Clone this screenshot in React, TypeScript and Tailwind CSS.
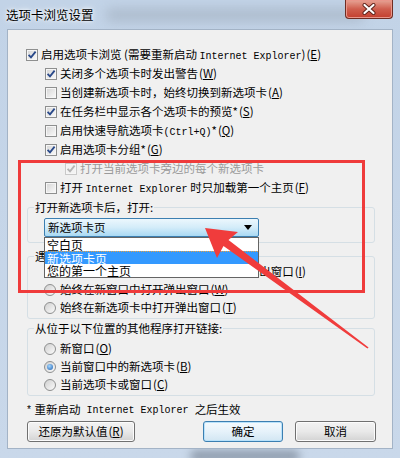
import React from "react";

const mono = "font-['Liberation_Mono',monospace] text-[10px]";

function K({ k }: { k: string }) {
  return (
    <span className="ml-[1px]">
      (<span className="underline">{k}</span>)
    </span>
  );
}

function Box({ checked, disabled }: { checked?: boolean; disabled?: boolean }) {
  return (
    <span
      className={`flex items-center justify-center w-[12px] h-[12px] shrink-0 border shadow-[inset_0_0_0_1px_#f6f6f6] ${
        disabled
          ? "border-[#c9c9c9] bg-[#f3f3f3]"
          : "border-[#8e8f8f] bg-linear-to-br from-[#d4d4d4] to-[#fbfbfb]"
      }`}
    >
      {checked && (
        <svg width="10" height="10" viewBox="0 0 10 10">
          <path
            d="M1.6 4.8 L4 7.4 L8.6 1.6"
            fill="none"
            stroke={disabled ? "#b4b4b4" : "#29498a"}
            strokeWidth="1.8"
          />
        </svg>
      )}
    </span>
  );
}

function Radio({ on }: { on?: boolean }) {
  return (
    <span className="flex items-center justify-center w-[12px] h-[12px] shrink-0 rounded-full border border-[#8e8f8f] bg-linear-to-br from-[#d0d0d0] to-[#fbfbfb]">
      {on && (
        <span className="w-[6px] h-[6px] rounded-full bg-[radial-gradient(circle_at_40%_35%,#a6d8ff,#1d5fb0)]" />
      )}
    </span>
  );
}

function CheckRow({
  pad,
  checked,
  disabled,
  children,
}: {
  pad: string;
  checked?: boolean;
  disabled?: boolean;
  children: React.ReactNode;
}) {
  return (
    <div className={`flex items-center gap-[3px] h-[19px] ${pad} ${disabled ? "text-[#9a9a9a]" : ""}`}>
      <Box checked={checked} disabled={disabled} />
      <span className="whitespace-nowrap">{children}</span>
    </div>
  );
}

function RadioRow({ on, children }: { on?: boolean; children: React.ReactNode }) {
  return (
    <div className="flex items-center gap-[4px] h-[18px] pl-[16px]">
      <Radio on={on} />
      <span className="whitespace-nowrap">{children}</span>
    </div>
  );
}

function Group({ title, className, children }: { title: string; className: string; children: React.ReactNode }) {
  return (
    <fieldset className={`ml-[19px] mr-[17px] border border-[#d5dfe5] rounded-[3px] ${className}`}>
      <legend className="ml-[6px] px-[1px] leading-[14px] whitespace-nowrap">{title}</legend>
      {children}
    </fieldset>
  );
}

function Button({ primary, className, children }: { primary?: boolean; className: string; children: React.ReactNode }) {
  return (
    <button
      className={`h-[21px] rounded-[3px] border flex items-center justify-center ${className} ${
        primary
          ? "border-[#3c7fb1] bg-linear-to-b from-[#f4fafd] via-[#e6f2fa] to-[#d2e6f3] shadow-[inset_0_0_0_1px_#b9e2fb]"
          : "border-[#707070] bg-linear-to-b from-[#f3f3f3] via-[#e9e9e9] to-[#d3d3d3] shadow-[inset_0_0_0_1px_#fcfcfc]"
      }`}
    >
      {children}
    </button>
  );
}

export default function App() {
  return (
    <div className="relative w-[400px] h-[458px] overflow-hidden bg-linear-to-b from-[#c2d3e7] to-[#c9d8ea] font-['Noto_Sans_CJK_SC',sans-serif] text-[11.5px] text-black">
      {/* blurred desktop behind the glass frame */}
      <div className="absolute left-[105px] top-[8px] w-[260px] h-[14px] rounded-full bg-[#9aa7b6] opacity-50 blur-[6px]" />
      <div className="absolute left-[190px] top-[450px] w-[110px] h-[12px] rounded-full bg-[#5a6675] opacity-50 blur-[4px]" />

      {/* Title bar */}
      <div className="relative flex items-start justify-between h-[29px]">
        <span className="pl-[6px] pt-[7px] text-[12.5px] leading-[16px] [text-shadow:0_0_6px_#fff,0_0_3px_#fff]">
          选项卡浏览设置
        </span>
        <div className="mr-[7px] w-[48px] h-[19px] rounded-b-[4px] border border-t-0 border-[#6e2c22] bg-linear-to-b from-[#e6a496] via-[#cf5e4e] to-[#c33e2d] shadow-[inset_0_0_0_1px_#e9968a] flex items-center justify-center">
          <svg width="16" height="12" viewBox="0 0 16 12">
            <path d="M3.5 2 L12.5 10 M12.5 2 L3.5 10" stroke="#5b2119" strokeWidth="4" strokeLinecap="round" />
            <path d="M3.5 2 L12.5 10 M12.5 2 L3.5 10" stroke="#ffffff" strokeWidth="2.2" strokeLinecap="round" />
          </svg>
        </div>
      </div>

      {/* Client area */}
      <div className="relative mx-[7px] h-[420px] border border-[#a3b3c6] bg-[#f0f0f0] pt-[15px]">
        <CheckRow pad="pl-[18px]" checked>
          启用选项卡浏览 (需要重新启动 <span className={mono}>Internet Explorer</span>)<K k="E" />
        </CheckRow>
        <CheckRow pad="pl-[37px]" checked>
          关闭多个选项卡时发出警告<K k="W" />
        </CheckRow>
        <CheckRow pad="pl-[37px]">
          当创建新选项卡时，始终切换到新选项卡<K k="A" />
        </CheckRow>
        <CheckRow pad="pl-[37px]" checked>
          在任务栏中显示各个选项卡的预览*<K k="S" />
        </CheckRow>
        <CheckRow pad="pl-[37px]">
          启用快速导航选项卡<span className={mono}>(Ctrl+Q)</span>*<K k="Q" />
        </CheckRow>
        <CheckRow pad="pl-[37px]" checked>
          启用选项卡分组*<K k="G" />
        </CheckRow>
        <CheckRow pad="pl-[57px]" checked disabled>
          打开当前选项卡旁边的每个新选项卡
        </CheckRow>
        <CheckRow pad="pl-[37px]">
          打开 <span className={mono}>Internet Explorer</span> 时只加载第一个主页<K k="F" />
        </CheckRow>

        <Group title="打开新选项卡后，打开:" className="mt-[3px] pb-[5px]">
          <div className="relative ml-[16px] mt-[4px] w-[215px]">
            <div className="flex items-center justify-between h-[19px] pl-[3px] pr-[6px] rounded-[2px] border border-[#3c7fb1] bg-linear-to-b from-[#ecf7fd] via-[#d3ecf9] to-[#a9d9f3]">
              <span>新选项卡页</span>
              <svg width="8" height="5" viewBox="0 0 8 5">
                <path d="M0 0 H8 L4 5 Z" fill="#000" />
              </svg>
            </div>
            {/* open list */}
            <div className="absolute left-0 top-[19px] z-10 w-[215px] border border-[#646464] bg-white text-[12px] leading-[13px]">
              <div className="h-[13px] pl-[2px]">空白页</div>
              <div className="h-[13px] pl-[2px] bg-[#3399ff] text-white border-t border-dotted border-[#e8a040]">新选项卡页</div>
              <div className="h-[13px] pl-[2px]">您的第一个主页</div>
            </div>
          </div>
        </Group>

        <Group title="遇到弹出窗口时:" className="mt-[6px] pb-[1px]">
          <RadioRow on>
            让 <span className={mono}>Internet Explorer</span> 决定如何打开弹出窗口<K k="I" />
          </RadioRow>
          <RadioRow>
            始终在新窗口中打开弹出窗口<K k="W" />
          </RadioRow>
          <RadioRow>
            始终在新选项卡中打开弹出窗口<K k="T" />
          </RadioRow>
        </Group>

        <Group title="从位于以下位置的其他程序打开链接:" className="mt-[2px] pt-[5px] pb-[1px]">
          <RadioRow>
            新窗口<K k="O" />
          </RadioRow>
          <RadioRow on>
            当前窗口中的新选项卡<K k="B" />
          </RadioRow>
          <RadioRow>
            当前选项卡或窗口<K k="C" />
          </RadioRow>
        </Group>

        <div className="mt-[5px] h-[18px] pl-[18px] flex items-center whitespace-nowrap">
          <span className={mono}>*</span>&nbsp;重新启动 <span className={mono}>&nbsp;Internet Explorer&nbsp;</span> 之后生效
        </div>

        <div className="mt-[2px] flex items-center pl-[19px] pr-[16px]">
          <Button className="w-[108px]">
            还原为默认值<K k="R" />
          </Button>
          <div className="flex-1" />
          <Button primary className="w-[80px]">
            确定
          </Button>
          <Button className="ml-[12px] w-[81px]">取消</Button>
        </div>
      </div>

      {/* Red annotation rectangle */}
      <div className="absolute left-[18px] top-[160px] w-[347px] h-[133px] border-[3px] border-[#ef3b3b] z-20" />

      {/* Red annotation arrow */}
      <svg className="absolute left-0 top-0 z-30" width="400" height="458" viewBox="0 0 400 458">
        <polygon
          points="205,228 238,232 228.5,240 368.6,347.4 367.4,348.6 223.5,246 217,258"
          fill="#f03c3c"
        />
      </svg>
    </div>
  );
}
